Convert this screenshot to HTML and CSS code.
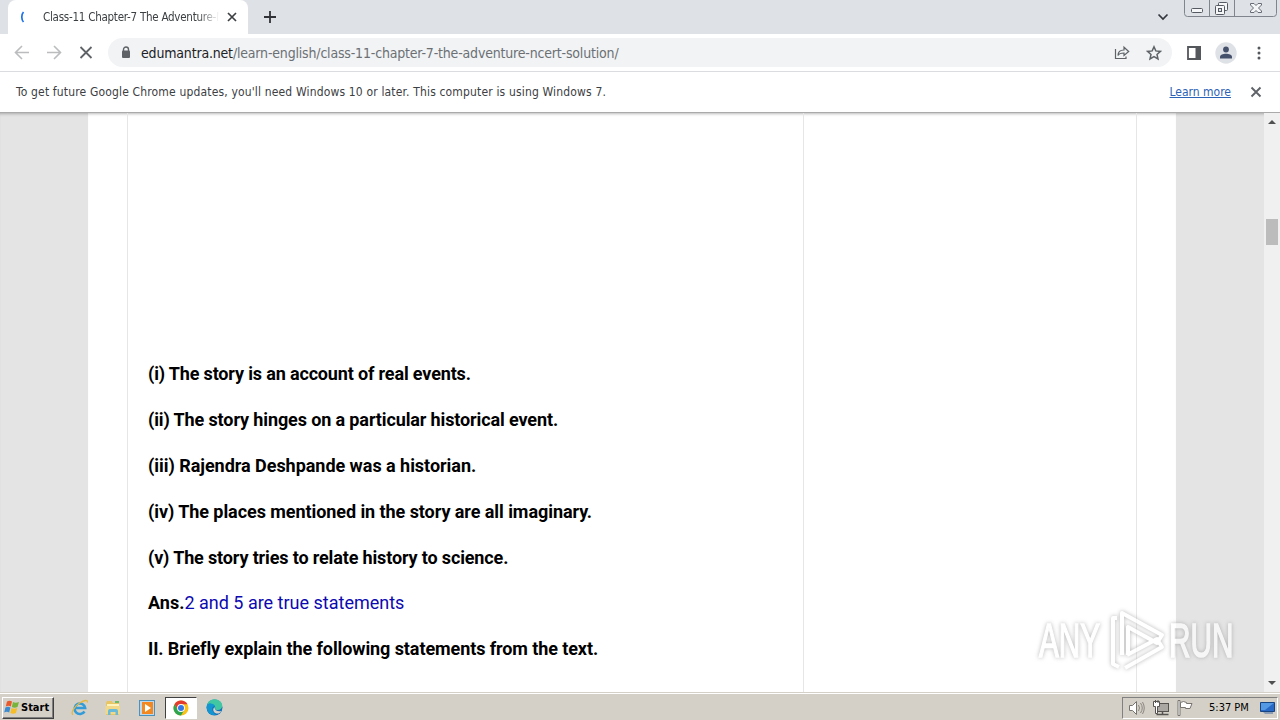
FILE: index.html
```html
<!DOCTYPE html>
<html lang="en">
<head>
<meta charset="utf-8">
<title>Class-11 Chapter-7 The Adventure</title>
<link rel="stylesheet" href="styles.css">
</head>
<body>
<div class="screen">
  <header class="tabstrip">
    <div class="tab">
      <svg class="spinner" width="16" height="16" viewBox="0 0 16 16"><path d="M7.500 3C5.200 5.500 5.200 10.500 7.500 13" fill="none" stroke="#1a73e8" stroke-width="1.700"/></svg>
      <span class="tab-title">Class-11 Chapter-7 The Adventure-N</span>
      <svg class="tab-close" width="10" height="10" viewBox="0 0 10 10"><path d="M1 1l8 8M9 1L1 9" stroke="#3c4043" stroke-width="1.700"/></svg>
    </div>
    <svg class="new-tab" width="12" height="12" viewBox="0 0 12 12"><path d="M6 0v12M0 6h12" stroke="#303238" stroke-width="1.800"/></svg>
    <svg class="tab-search" width="12" height="8" viewBox="0 0 12 8"><path d="M1.500 1.500L6 6l4.500-4.500" fill="none" stroke="#34373d" stroke-width="1.700"/></svg>
    <svg class="win-controls" width="94" height="18" viewBox="0 0 94 18">
      <path d="M.5 0v13.500q0 3 3 3h86q3 0 3-3V0M25.500 0v16M50.500 0v16" fill="none" stroke="#80848d"/>
      <rect x="7.500" y="8.500" width="11" height="4" rx="1" fill="#f5f6f8" stroke="#555961"/>
      <rect x="34.500" y="2.500" width="9" height="8" rx="1" fill="#f5f6f8" stroke="#555961"/>
      <rect x="31.500" y="5.500" width="9" height="9" rx="1" fill="#f5f6f8" stroke="#555961"/><rect x="34.500" y="8.500" width="3" height="3" fill="#dee1e6" stroke="#555961"/>
      <path d="M66.500 3.500h3.500l2 2 2-2h3.500v1.500l-3 3 3 3v1.500H74l-2-2-2 2h-3.500V11l3-3-3-3z" fill="#f5f6f8" stroke="#666a72"/>
    </svg>
  </header>
  <div class="toolbar">
    <svg class="nav" width="88" height="18" viewBox="0 0 88 18" fill="none">
      <path d="M15 8.500H2M8 2L1.500 8.500 8 15M33 8.500h13M40 2L46.500 8.500 40 15" stroke="#babcbe" stroke-width="1.600"/>
      <path d="M66.500 3l11 11M77.500 3l-11 11" stroke="#5f6368" stroke-width="1.800"/>
    </svg>
    <div class="omnibox">
      <svg class="lock" width="10" height="13" viewBox="0 0 10 13"><path d="M2.500 6V3.500a2.500 2.500 0 0 1 5 0V6" fill="none" stroke="#5f6368" stroke-width="1.400"/><rect x="1" y="4.500" width="8" height="7.500" rx="1" fill="#5f6368"/></svg>
      <span class="url"><b>edumantra.net</b>/learn-english/class-11-chapter-7-the-adventure-ncert-solution/</span>
      <svg class="share" width="16" height="16" viewBox="0 0 16 16" fill="none" stroke="#5f6368" stroke-width="1.200"><path d="M1.500 4v9.500h10.500V11.500M4 10.500c0-4 2.500-5.500 6-5.500V2.200L14.700 6.500 10 10.500V8C7 8 5 8.500 4 10.500z"/></svg>
      <svg class="star" width="16" height="16" viewBox="0 0 16 16" fill="none" stroke="#5f6368" stroke-width="1.500"><path d="M8 1.800l1.800 4.100 4.600.5-3.400 3 1 4.500L8 11.600 4 13.900l1-4.500-3.400-3 4.600-.5z"/></svg>
    </div>
    <svg class="panel" width="14" height="14" viewBox="0 0 14 14"><path d="M1 1h12v12H1z" fill="none" stroke="#54575c" stroke-width="1.800"/><path d="M8.500 0H14v14H8.500z" fill="#54575c"/></svg>
    <svg class="avatar" width="22" height="22" viewBox="0 0 22 22"><circle cx="11" cy="11" r="10.700" fill="#dee1e6"/><circle cx="11" cy="7.500" r="2.900" fill="#45506b"/><path d="M5 16.500v-1.500c0-2 3-3.200 6-3.200s6 1.200 6 3.200v1.500z" fill="#45506b"/></svg>
    <svg class="more" width="4" height="14" viewBox="0 0 4 14" fill="#54575c"><circle cx="2" cy="2" r="1.500"/><circle cx="2" cy="7" r="1.500"/><circle cx="2" cy="12" r="1.500"/></svg>
  </div>
  <div class="infobar">
    <span class="notice">To get future Google Chrome updates, you'll need Windows 10 or later. This computer is using Windows 7.</span>
    <a class="learn">Learn more</a>
    <svg width="12" height="12" viewBox="0 0 12 12"><path d="M1.500 1.500l9 9M10.500 1.500l-9 9" stroke="#5f6368" stroke-width="1.900"/></svg>
  </div>
  <main class="viewport">
    <div class="page">
      <article class="article">
        <p class="q1">(i) The story is an account of real events.</p>
        <p class="q2">(ii) The story hinges on a particular historical event.</p>
        <p class="q3">(iii) Rajendra Deshpande was a historian.</p>
        <p class="q4">(iv) The places mentioned in the story are all imaginary.</p>
        <p class="q5">(v) The story tries to relate history to science.</p>
        <p class="ans">Ans.<span class="answer">2 and 5 are true statements</span></p>
        <p class="q6">II. Briefly explain the following statements from the text.</p>
      </article>
      <aside class="sidebar"></aside>
    </div>
    <div class="scrollbar">
      <svg width="8" height="4" viewBox="0 0 8 4"><path d="M4 0l4 4H0z" fill="#505050"/></svg>
      <i class="thumb"></i>
      <svg class="down" width="8" height="4" viewBox="0 0 8 4"><path d="M0 0h8L4 4z" fill="#505050"/></svg>
    </div>
  </main>
  <footer class="taskbar">
    <div class="start">
      <svg width="16" height="15" viewBox="0 0 16 15"><path d="M3 1.500q2.500-1.500 5 0L6.800 6.500q-2.300-1.300-5 0z" fill="#e8592b"/><path d="M9 2q2.500 1.500 6 0L13.500 7Q10.500 8.500 7.800 7z" fill="#78b43c"/><path d="M1.400 7.500q2.700-1.300 5 0L5.200 12.500q-2.500-1.300-5 0z" fill="#3c8bd0"/><path d="M7.500 8q2.700 1.500 5.700 0L12 13q-3 1.500-5.700 0z" fill="#f5bd27"/></svg>
      <span>Start</span>
    </div>
    <svg class="ie" width="18" height="18" viewBox="0 0 18 18"><path d="M13.500 12.500A5.300 5.300 0 1 1 14.200 9H5" fill="none" stroke="#329bd8" stroke-width="2.500"/><path d="M2 15.800C-.5 14 3 7.500 9 3.800c4-2.500 8-3.500 7.300-.3" fill="none" stroke="#e3b83f" stroke-width="1.300"/></svg>
    <svg class="folder" width="18" height="18" viewBox="0 0 18 18"><path d="M2 4l1-2h5l1 2h6v12H2z" fill="#e8c563"/><path d="M3 5h12v4H3z" fill="#fff3bd"/><path d="M1.500 7h14.500v8H1.500z" fill="#f2d98a"/><path d="M4 16v-4q0-2 2-2h6q2 0 2 2v4h-2.500v-3h-5v3z" fill="#69b9d8"/><path d="M11 2h4v2h-4z" fill="#6ebb64"/></svg>
    <svg class="media" width="16" height="16" viewBox="0 0 16 16"><rect x=".5" y=".5" width="15" height="15" fill="#bcd8ea" stroke="#4b91bc"/><rect x="3" y="2" width="11" height="12" fill="#f38620"/><circle cx="8.300" cy="8" r="5" fill="#f28a22"/><path d="M6 4l6 4-6 4z" fill="#fff"/></svg>
    <div class="task-active">
      <svg width="16" height="16" viewBox="0 0 16 16"><circle cx="8" cy="8" r="7.500" fill="#fbc116"/><path d="M1.500 4.250A7.500 7.500 0 0 1 14.500 4.250H8L4.750 9.900z" fill="#e33b2e"/><path d="M1.500 4.250A7.500 7.500 0 0 0 8 15.500L11.250 9.900H4.750z" fill="#2da44f"/><circle cx="8" cy="8" r="3.900" fill="#fff"/><circle cx="8" cy="8" r="3" fill="#3478e5"/></svg>
    </div>
    <svg class="edge" width="17" height="17" viewBox="0 0 17 17"><circle cx="8.500" cy="8.500" r="8" fill="#1471b8"/><path d="M1 6C2.500-.5 12-2 15.500 4c2 4-.5 7.500-4.500 7-3-.3-1.300-2-2-3.500C7.500 4.500 3 4 1 6z" fill="#42c7a3"/><path d="M1 6c2.500-2.500 7-1.500 8 1.200C5 7 5.300 13 10 15.800 4 17.500-.5 12 1 6z" fill="#1296d2"/><path d="M8.500 8c0 3.500 3.200 4.800 6.900 4-2 3.500-6 3.200-7.700.5-.9-1.600-.4-3.300.8-4.500z" fill="#d6d2ca"/></svg>
    <div class="tray">
      <svg class="tray-icons" width="67" height="18" viewBox="0 0 67 18">
        <path d="M1.500 6.500h3l4-4v13l-4-4h-3z" fill="#fff" stroke="#77736e"/><path d="M10.500 6q2 3 0 6M12.500 4q3.500 5 0 10M14.500 3q3.500 6 0 12" fill="none" stroke="#8b8781"/>
        <rect x="29.500" y="4.500" width="11" height="8" fill="#aaa7a3" stroke="#55524f"/><path d="M28.500 15.500h12M34.500 13v2" stroke="#55524f" stroke-width="1.500"/><path d="M25.500 2.500h6v5h-2v7h-2v-7h-2zM27.500 1v3M30 1v3" fill="#fff" stroke="#55524f"/>
        <path d="M50 1.500h2v15h-2zM52.500 3.500q3-2 6 0v1h5.500l-2 5h-4.500v-1h-5z" fill="#fff" stroke="#77736e"/>
      </svg>
      <span class="clock">5:37 PM</span>
      <svg class="desktop" width="15" height="14" viewBox="0 0 15 14"><path d="M.5 1.500h14v9H.5z" fill="#2769c5" stroke="#174584"/><path d="M1 2h13l-9 7H1z" fill="#5499e3"/><path d="M3 11h10v2H5z" fill="#8a9db5"/></svg>
    </div>
  </footer>
  <div class="watermark">
    <span class="any">ANY</span>
    <svg class="play" width="60" height="66" viewBox="0 0 60 66" fill="none" stroke="#fff" stroke-width="4" stroke-linejoin="round"><path d="M8 10H4v46l6 3M13 47V5l40 22-5 8-29-16v28M18 47l30-16 5 8L16 60"/></svg>
    <span class="run">RUN</span>
  </div>
</div>
</body>
</html>
```
FILE: styles.css
```css
* { box-sizing: border-box; }
body { margin: 0; }
svg { display: block; flex: none; }
.screen { position: relative; width: 1280px; height: 720px; overflow: hidden; display: flex; flex-direction: column; background: #fff; font-family: "DejaVu Sans Condensed", "DejaVu Sans", sans-serif; font-stretch: condensed; white-space: nowrap; }
.tabstrip { height: 34px; flex: none; display: flex; align-items: flex-start; background: #dee1e6; padding-left: 8px; }
.tab { width: 240px; height: 34px; display: flex; align-items: center; background: #fff; border-radius: 8px 8px 0 0; padding-left: 8px; }
.spinner { margin-right: 11px; }
.tab-title { width: 176px; font-size: 11.500px; color: #3c4043; letter-spacing: -.25px; -webkit-mask-image: linear-gradient(90deg, #000 88%, transparent); mask-image: linear-gradient(90deg, #000 88%, transparent); }
.tab-close { margin-left: 8px; }
.new-tab { margin: 11px 0 0 16px; }
.tab-search { margin: 13px 15px 0 auto; }
.win-controls { margin-right: 2px; }
.toolbar { height: 38px; flex: none; display: flex; align-items: center; border-bottom: 1px solid #dadce0; }
.nav { margin-left: 14px; }
.omnibox { width: 1064px; height: 29px; margin-left: 6px; display: flex; align-items: center; background: #f1f3f4; border-radius: 15px; padding-left: 13px; }
.url { margin-left: 10px; font-size: 14px; letter-spacing: -.18px; color: #6c7075; }
.url b { font-weight: 400; color: #202124; }
.share { margin-left: auto; }
.star { margin: 0 10px 0 16px; }
.panel { margin-left: 15px; }
.avatar { margin-left: 14px; }
.more { margin-left: 20px; }
.infobar { height: 40px; flex: none; display: flex; align-items: center; padding: 0 18px 0 16px; font-size: 12px; color: #3c4043; }
.notice { letter-spacing: .16px; }
.learn { margin: 0 19px 0 auto; color: #2b62b5; text-decoration: underline; }
.viewport { height: 580px; flex: none; display: flex; background: #e4e4e4; border-top: 1px solid #aaa; box-shadow: inset 0 3px 3px -2px #aaa; }
.page { width: 1088px; margin-left: 88px; padding: 0 39px; display: flex; background: #fff; box-shadow: inset 0 3px 3px -2px #bbb; }
.article { width: 677px; padding: 249px 0 0 20px; border: solid #e6e6e6; border-width: 0 1px; font-family: Roboto, sans-serif; font-stretch: normal; font-size: 18px; font-weight: 700; line-height: 24px; color: #000; }
.article p { margin: 0 0 22px; }
.article .q1 { letter-spacing: -.155px; }
.article .q2 { letter-spacing: -.12px; }
.article .q3 { letter-spacing: -.035px; }
.article .q4 { letter-spacing: -.065px; }
.article .q5 { margin-bottom: 21px; letter-spacing: -.145px; }
.article .q6 { letter-spacing: -.09px; }
.sidebar { flex: 1; border-right: 1px solid #e6e6e6; }
.answer { font-weight: 400; color: #0d09b0; }
.scrollbar { width: 16px; margin-left: auto; background: #f0f0f0; display: flex; flex-direction: column; align-items: center; padding: 7px 0; }
.thumb { width: 12px; height: 26px; margin-top: 95px; background: #bcbcbc; }
.down { margin-top: auto; }
.taskbar { height: 28px; flex: none; display: flex; align-items: center; background: #d4d0c8; border-top: 1px solid #d4d0c8; box-shadow: inset 0 1px #fff; padding: 2px 2px 0; }
.start { width: 52px; height: 22px; display: flex; align-items: center; gap: 1px; padding-left: 1px; border: 1px solid; border-color: #fff #404040 #404040 #fff; box-shadow: inset -1px -1px #808080; font-size: 11px; font-weight: 700; color: #000; }
.ie { margin-left: 17px; }
.folder { margin-left: 15px; }
.media { margin-left: 17px; }
.task-active { width: 32px; height: 22px; margin-left: 10px; display: flex; align-items: center; justify-content: center; background: #fff; border: 1px solid; border-color: #404040 #fff #fff #404040; }
.edge { margin-left: 9px; }
.tray { width: 156px; height: 22px; margin-left: auto; display: flex; align-items: center; border: 1px solid; border-color: #808080 #fff #fff #808080; }
.tray-icons { margin-left: 5px; }
.clock { width: 40px; margin-left: 14px; font-size: 11px; color: #000; }
.desktop { margin-left: 11px; }
.watermark { position: absolute; left: 1039px; top: 608px; height: 66px; display: flex; align-items: center; color: #fff; font: 400 48px/66px "Liberation Sans", sans-serif; filter: drop-shadow(0 0 2px #999); opacity: .7; }
.any, .run { width: 66px; -webkit-text-stroke: 1.5px #fff; transform: scaleX(.62); transform-origin: 0 50%; }
.play { margin-left: 4px; }
.run { margin-left: 0; }
```
